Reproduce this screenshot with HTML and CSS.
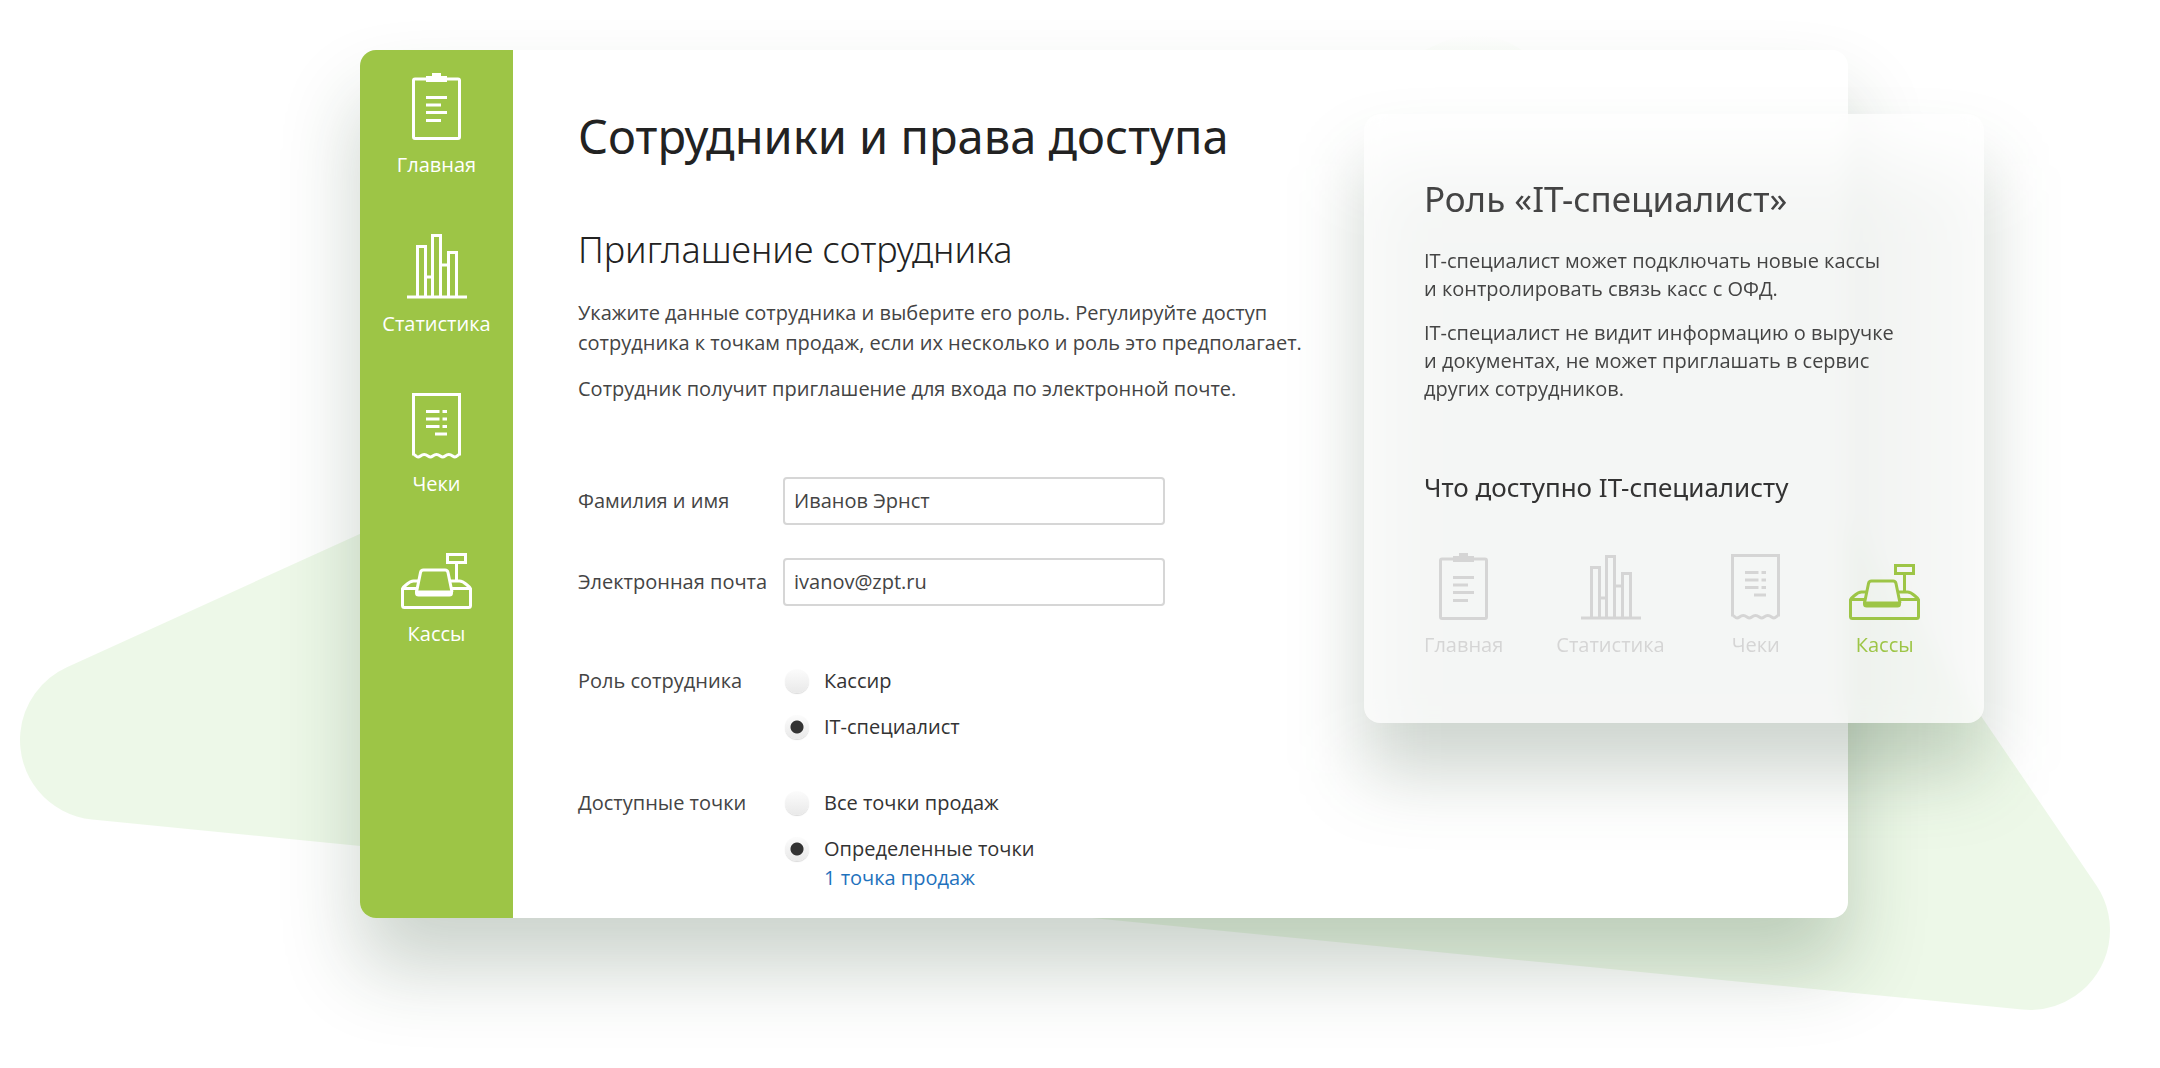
FILE: index.html
```html
<!DOCTYPE html>
<html lang="ru">

<head>
	<meta charset="UTF-8">
	<meta name="viewport" content="width=device-width, initial-scale=1.0">
	<title>Сотрудники и права доступа</title>
	<link rel="stylesheet" href="styles.css">
</head>

<body>
	<!-- icons -->
	<svg class="sprite" aria-hidden="true">
		<symbol id="icon-main" viewBox="0 0 49 67">
			<rect x="1.5" y="6" width="46" height="59.5" rx="1.5" fill="none" stroke="currentColor" stroke-width="3" />
			<path d="M14 3h6V0h9v3h6v6H14z" fill="currentColor" />
			<path d="M14 24.500h21M14 32h15M14 39.500h21M14 47.500h15" fill="none" stroke="currentColor" stroke-width="3" />
		</symbol>
		<symbol id="icon-stat" viewBox="0 0 60 65">
			<path d="M0 63h60M10.500 63V12.500h8V63M25.500 63V1.500h8V63M41.500 63V18.500h8V63M18.500 43h7M33.500 31h8" fill="none" stroke="currentColor" stroke-width="3" />
		</symbol>
		<symbol id="icon-check" viewBox="0 0 49 66">
			<path d="M1.500 62.500V1.500h46v61" fill="none" stroke="currentColor" stroke-width="3" />
			<path d="M1.500 61.500C3.500 61.500 4 64 6.100 64S9 61.500 12.200 61.500 16.300 64 18.400 64 21.300 61.500 24.500 61.500 28.600 64 30.700 64 33.600 61.500 36.800 61.500 40.900 64 43 64 45.500 61.500 47.500 61.500" fill="none" stroke="currentColor" stroke-width="3" />
			<path d="M14 18.500h13.500M30.500 18.500H35M14 26h13.500M30.500 26H35M14 33.500h13.500M30.500 33.500H35M23 41h12" fill="none" stroke="currentColor" stroke-width="3" />
		</symbol>
		<symbol id="icon-kassa" viewBox="0 0 71 56">
			<rect x="46.500" y="1.500" width="18" height="8" fill="none" stroke="currentColor" stroke-width="3" />
			<path d="M55.500 10v18" stroke="currentColor" stroke-width="3" />
			<path d="M16 35.500H1.500v17q0 2 2 2h64q2 0 2-2v-17H50M1.500 35.500q1-1.500 4-4 4-3.500 7-3.500h5M69.500 35.500q-1-1.500-4-4-4-3.500-7-3.500H49" fill="none" stroke="currentColor" stroke-width="3" stroke-linejoin="round" />
			<path d="M15.500 39l4-19.500q.5-2.500 3-2.500h21.500q2.500 0 3 2.500l4 19.500" fill="none" stroke="currentColor" stroke-width="3" />
			<path d="M14 37.500h38v2.500q0 3.500-3.500 3.500h-31q-3.500 0-3.500-3.500z" fill="currentColor" />
		</symbol>
	</svg>

	<div class="stage">
		<svg class="blob" viewBox="0 0 2160 1068" preserveAspectRatio="none" aria-hidden="true">
			<linearGradient id="blob-fill" gradientUnits="userSpaceOnUse" x1="0" y1="35" x2="0" y2="120">
				<stop offset="0" stop-color="#fff" />
				<stop offset="1" stop-color="#edf8e8" />
			</linearGradient>
			<path d="M100 740L1475 115 2030 930z" />
		</svg>

		<div class="window">
			<nav class="sidebar">
				<a class="item" href="#main"><svg width="49" height="67"><use href="#icon-main" /></svg>Главная</a>
				<a class="item" href="#stat"><svg width="60" height="65"><use href="#icon-stat" /></svg>Статистика</a>
				<a class="item" href="#check"><svg width="49" height="66"><use href="#icon-check" /></svg>Чеки</a>
				<a class="item" href="#kassa"><svg width="71" height="56"><use href="#icon-kassa" /></svg>Кассы</a>
			</nav>

			<main class="content">
				<h1>Сотрудники и права доступа</h1>
				<h2>Приглашение сотрудника</h2>
				<p>Укажите данные сотрудника и выберите его роль. Регулируйте доступ<br>
					сотрудника к точкам продаж, если их несколько и роль это предполагает.</p>
				<p>Сотрудник получит приглашение для входа по электронной почте.</p>

				<form class="form">
					<div class="row">
						<label for="name">Фамилия и имя</label>
						<input class="text-input" id="name" type="text" value="Иванов Эрнст">
					</div>
					<div class="row">
						<label for="email">Электронная почта</label>
						<input class="text-input" id="email" type="email" value="ivanov@zpt.ru">
					</div>

					<div class="group group-role" role="radiogroup" aria-labelledby="role-title">
						<span id="role-title">Роль сотрудника</span>
						<div class="options">
							<label class="option"><input type="radio" name="role">Кассир</label>
							<label class="option"><input type="radio" name="role" checked>IT-специалист</label>
						</div>
					</div>

					<div class="group" role="radiogroup" aria-labelledby="points-title">
						<span id="points-title">Доступные точки</span>
						<div class="options">
							<label class="option"><input type="radio" name="points">Все точки продаж</label>
							<div>
								<label class="option"><input type="radio" name="points" checked>Определенные точки</label>
								<a class="points-link" href="#points">1 точка продаж</a>
							</div>
						</div>
					</div>
				</form>
			</main>
		</div>

		<aside class="popup">
			<div class="popup-shadow"></div>
			<div class="card">
				<h2>Роль «IT-специалист»</h2>
				<p>IT-специалист может подключать новые кассы<br>
					и контролировать связь касс с ОФД.</p>
				<p>IT-специалист не видит информацию о выручке<br>
					и документах, не может приглашать в сервис<br>
					других сотрудников.</p>
				<h3>Что доступно IT-специалисту</h3>
				<div class="access">
					<div class="item"><svg width="49" height="67"><use href="#icon-main" /></svg>Главная</div>
					<div class="item"><svg width="60" height="65"><use href="#icon-stat" /></svg>Статистика</div>
					<div class="item"><svg width="49" height="66"><use href="#icon-check" /></svg>Чеки</div>
					<div class="item active"><svg width="71" height="56"><use href="#icon-kassa" /></svg>Кассы</div>
				</div>
			</div>
		</aside>
	</div>
</body>

</html>
```
FILE: styles.css
```css
* {
	box-sizing: border-box;
}

body {
	margin: 0;
	background: #fff;
	color: #444;
	font: 20px/30px "Open Sans", "Noto Sans", sans-serif;
}

h1, h2, h3, p {
	margin: 0;
}

h1, h2, h3 {
	font-family: "Noto Sans", "Open Sans", sans-serif;
}

a {
	text-decoration: none;
}

.sprite {
	position: absolute;
	width: 0;
	height: 0;
}

.stage {
	position: relative;
	min-height: 100vh;
	padding: 50px 312px 100px 360px;
	overflow: hidden;
}

.blob {
	position: absolute;
	top: 0;
	left: 0;
	width: 100%;
	height: 100%;
}

.blob path {
	fill: url(#blob-fill);
	stroke: url(#blob-fill);
	stroke-width: 160px;
	stroke-linejoin: round;
}

.window {
	position: relative;
	display: flex;
	background: #fff;
	border-radius: 16px;
	box-shadow: 0 50px 80px rgba(30, 64, 36, .23);
}

/* sidebar */

.sidebar {
	display: flex;
	flex-direction: column;
	gap: 55px;
	flex: none;
	width: 153px;
	padding-top: 23px;
	background: #9dc546;
	border-radius: 16px 0 0 16px;
}

.item {
	display: flex;
	flex-direction: column;
	align-items: center;
	gap: 11px;
	line-height: 28px;
}

.sidebar .item {
	color: #fff;
}

/* content */

.content {
	flex: 1;
	padding: 56px 65px 26px;
}

.content h1 {
	margin-bottom: 62px;
	color: #222;
	font-size: 47px;
	font-weight: 400;
	line-height: 60px;
}

.content h2 {
	margin-bottom: 26px;
	color: #222;
	font-size: 36px;
	font-weight: 300;
	line-height: 44px;
}

p + p {
	margin-top: 16px;
}

.form {
	margin-top: 73px;
}

.row,
.group {
	display: grid;
	grid-template-columns: 205px 1fr;
}

.row {
	align-items: center;
	margin-bottom: 33px;
}

.text-input {
	width: 382px;
	height: 48px;
	padding: 0 9px 2px;
	border: 2px solid #d6d6d6;
	border-radius: 4px;
	background: #fff;
	color: #444;
	font: inherit;
}

.group-role {
	margin: 60px 0 46px;
}

.options {
	display: flex;
	flex-direction: column;
	gap: 16px;
}

.option {
	display: flex;
	align-items: center;
	gap: 15px;
	color: #333;
}

.option input {
	appearance: none;
	width: 24px;
	height: 24px;
	margin: 0 0 0 2px;
	border-radius: 50%;
	background: linear-gradient(#fcfcfc, #e9e9e9);
	box-shadow: 0 1px 1px rgba(0, 0, 0, .15);
}

.option input:checked {
	background: radial-gradient(circle, #333 6px, transparent 7px), linear-gradient(#fcfcfc, #e9e9e9);
}

.points-link {
	display: block;
	margin-left: 41px;
	color: #1f72bd;
	line-height: 28px;
}

/* role card */

.popup {
	position: absolute;
	top: 114px;
	right: 176px;
	width: 620px;
}

/* lies under the card, so it also tints the glass */
.popup-shadow {
	position: absolute;
	inset: 0;
	border-radius: 16px;
	background: rgba(30, 64, 36, .22);
	filter: blur(36px);
	transform: translateY(50px);
}

.card {
	position: relative;
	padding: 63px 60px 64px;
	border-radius: 16px;
	background: rgba(255, 255, 255, .78);
	backdrop-filter: blur(10px);
	line-height: 28px;
}

.card h2 {
	margin-bottom: 26px;
	font-size: 35px;
	font-weight: 400;
	line-height: 44px;
}

.card h3 {
	margin: 66px 0 48px;
	color: #333;
	font-size: 26px;
	font-weight: 400;
	line-height: 36px;
}

.access {
	display: flex;
	align-items: flex-end;
	gap: 53px;
	color: #d5d5d5;
}

.access .item {
	min-width: 76px;
}

.access .active {
	color: #9dc546;
}
```
